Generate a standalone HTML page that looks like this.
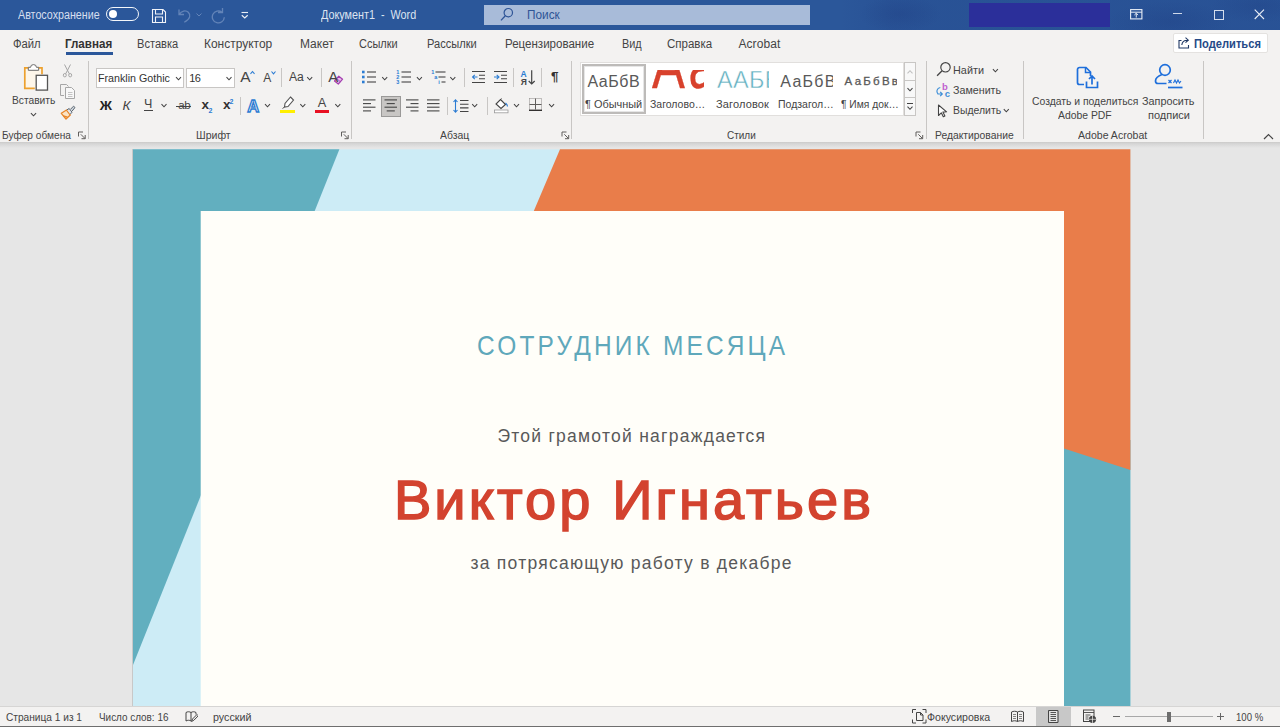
<!DOCTYPE html>
<html lang="ru"><head><meta charset="utf-8"><title>Документ1 - Word</title>
<style>
html,body{margin:0;padding:0;}
body{width:1280px;height:727px;overflow:hidden;background:#e6e6e6;font-family:"Liberation Sans", sans-serif;}
#app{position:relative;width:1280px;height:727px;overflow:hidden;}
#app div,#app svg,#app span{position:absolute;}
#app span{white-space:pre;line-height:1;transform-origin:0 50%;}
#app span span{position:static;}
</style></head><body><div id="app">
<div style="left:0px;top:0px;width:1280px;height:30px;background:#2b579a;"></div>
<div style="left:840px;top:0px;width:440px;height:30px;background:radial-gradient(ellipse 60px 26px at 60px 14px,rgba(20,40,110,0.160),transparent 70%),radial-gradient(ellipse 90px 30px at 330px 22px,rgba(20,40,110,0.160),transparent 70%),radial-gradient(ellipse 70px 24px at 420px 6px,rgba(20,40,110,0.140),transparent 70%),linear-gradient(to right,transparent,rgba(20,40,110,0.100) 12%);"></div>
<div style="left:0px;top:30px;width:1280px;height:112px;background:#f3f2f1;"></div>
<div style="left:0px;top:142px;width:1280px;height:6px;background:linear-gradient(#cbcac9,#d6d6d6 30%,#e6e6e6);"></div>
<div style="left:0px;top:148px;width:1280px;height:558px;background:#e6e6e6;"></div>
<div style="left:0px;top:706px;width:1280px;height:21px;background:#f3f2f1;"></div>
<div style="left:0px;top:706px;width:1280px;height:1px;background:#d6d5d4;"></div>
<div style="left:0px;top:725.6px;width:1280px;height:1.4px;background:#6e6e6e;"></div>
<div style="left:484px;top:5px;width:326px;height:20px;background:#a8bbd9;"></div>
<div style="left:969px;top:3px;width:141px;height:24px;background:#2b2f9a;"></div>
<div style="left:1173px;top:13.2px;width:9px;height:1px;background:#cfd9ea;"></div>
<div style="left:66px;top:52.3px;width:47px;height:2.8px;background:#2b579a;"></div>
<div style="left:88px;top:61px;width:1px;height:77.5px;background:#c8c6c4;"></div>
<div style="left:351.3px;top:61px;width:1px;height:77.5px;background:#c8c6c4;"></div>
<div style="left:571.2px;top:61px;width:1px;height:77.5px;background:#c8c6c4;"></div>
<div style="left:925.8px;top:61px;width:1px;height:77.5px;background:#c8c6c4;"></div>
<div style="left:1022.5px;top:61px;width:1px;height:77.5px;background:#c8c6c4;"></div>
<div style="left:1203.2px;top:61px;width:1px;height:77.5px;background:#c8c6c4;"></div>
<div style="left:281.1px;top:68px;width:1px;height:19px;background:#c8c6c4;"></div>
<div style="left:320.9px;top:68px;width:1px;height:19px;background:#c8c6c4;"></div>
<div style="left:144px;top:110.3px;width:8.5px;height:1px;background:#444;"></div>
<div style="left:176px;top:105.5px;width:14.5px;height:1px;background:#444;"></div>
<div style="left:239.5px;top:97px;width:1px;height:18px;background:#c8c6c4;"></div>
<div style="left:279.7px;top:109.5px;width:15px;height:3.3px;background:#ffef00;"></div>
<div style="left:315.3px;top:109.5px;width:14px;height:3.3px;background:#e81123;"></div>
<div style="left:464.4px;top:68px;width:1px;height:19px;background:#c8c6c4;"></div>
<div style="left:513.3px;top:68px;width:1px;height:19px;background:#c8c6c4;"></div>
<div style="left:540.9px;top:68px;width:1px;height:19px;background:#c8c6c4;"></div>
<div style="left:446.9px;top:97px;width:1px;height:18px;background:#c8c6c4;"></div>
<div style="left:487px;top:97px;width:1px;height:18px;background:#c8c6c4;"></div>
<div style="left:1035.5px;top:707px;width:35.5px;height:18.5px;background:#c8c8c8;"></div>
<div style="left:1113px;top:716px;width:7px;height:1px;background:#666;"></div>
<div style="left:1124.5px;top:716px;width:88.5px;height:1px;background:#a8a8a8;"></div>
<div style="left:1167px;top:711.5px;width:4px;height:10.5px;background:#6e6e6e;"></div>
<div style="left:1217px;top:716px;width:7px;height:1px;background:#666;"></div>
<div style="left:1220px;top:713px;width:1px;height:7px;background:#666;"></div>
<svg style="left:133px;top:149px" width="998" height="557" viewBox="133 149 998 557"><rect x="133" y="149.300" width="997.400" height="557" fill="#cdecf6"/><polygon points="133,149.300 339.400,149.300 133,665" fill="#62afbf"/><rect x="1060" y="440" width="70.400" height="266" fill="#62afbf"/><polygon points="560,149.300 1130.400,149.300 1130.400,470.100 1064,448.400 1064,211 533.800,211" fill="#e97d4a"/><rect x="200.700" y="211" width="863.300" height="495" fill="#fffef9"/></svg>
<div style="left:132px;top:149px;width:1px;height:557px;background:rgba(0,0,0,0.130)"></div>
<div style="left:106px;top:7px;width:30.500px;height:11.600px;border:1.700px solid #f4f7fb;border-radius:9px;box-sizing:content-box"></div>
<div style="left:109px;top:10.300px;width:8.200px;height:8.200px;border-radius:50%;background:#fff"></div>
<svg style="left:151px;top:8px" width="16" height="16" viewBox="0 0 16 16" ><path d="M1.5 1.5h10.5l2.5 2.5v10.5h-13z M4.5 1.5v4.5h7v-4.5 M4.5 14.5v-5.5h7v5.5" fill="none" stroke="#f0f3f9" stroke-width="1.1"/></svg>
<svg style="left:177px;top:7px" width="16" height="17" viewBox="0 0 16 17" ><path d="M2 2.5v5h5 M2.3 7.3c2-3.5 6.5-4.5 9-2s2.500 6.500-4 10" fill="none" stroke="#6384b8" stroke-width="1.3"/></svg>
<svg style="left:196px;top:13px" width="6" height="4" viewBox="0 0 6 4" ><path d="M0.500 0.500l2.500 2.500l2.500-2.500" fill="none" stroke="#6384b8" stroke-width="1"/></svg>
<svg style="left:211px;top:7px" width="16" height="17" viewBox="0 0 16 17" ><path d="M11.5 1v4.500h-4.500 M11 5.200a6 6 0 1 0 2.300 5" fill="none" stroke="#6384b8" stroke-width="1.3"/></svg>
<svg style="left:241px;top:11px" width="8" height="9" viewBox="0 0 8 9" ><path d="M0.500 1.500h6.500" stroke="#e9eef6" stroke-width="1.1"/><path d="M0.800 4.200l2.950 2.800l2.950-2.800" fill="none" stroke="#e9eef6" stroke-width="1.2"/></svg>
<svg style="left:500px;top:7px" width="14" height="15" viewBox="0 0 14 15" ><circle cx="8.300" cy="5.700" r="4.200" fill="none" stroke="#2e5496" stroke-width="1.2"/><path d="M5.300 8.800l-4.300 4.600" stroke="#2e5496" stroke-width="1.3"/></svg>
<svg style="left:1130px;top:9px" width="13" height="11" viewBox="0 0 13 11" ><rect x="0.600" y="0.600" width="11.300" height="9.300" fill="none" stroke="#e9eef6" stroke-width="1.1"/><path d="M0.600 3.200h11.300" stroke="#e9eef6" stroke-width="1"/><path d="M6.250 8.500v-4 M4.400 6l1.850-1.800l1.850 1.800" fill="none" stroke="#e9eef6" stroke-width="1"/></svg>
<div style="left:1214px;top:10px;width:7.500px;height:7.500px;border:1px solid #d5deed"></div>
<svg style="left:1254px;top:9px" width="11" height="11" viewBox="0 0 11 11" ><path d="M0.700 0.700l9.300 9.300 M10 0.700l-9.300 9.300" stroke="#e9eef6" stroke-width="1.1"/></svg>
<div style="left:1173px;top:33px;width:93px;height:18px;background:#fff;border:1px solid #e4e2e0;border-radius:2px"></div>
<svg style="left:1178px;top:36px" width="13" height="13" viewBox="0 0 13 13" ><path d="M3.500 4.500h-2.500v7.500h9.500v-3" fill="none" stroke="#1f3864" stroke-width="1.1"/><path d="M3.800 9c0.300-3 2.500-4.800 5.700-4.800 M7.500 1.700l2.800 2.500l-2.800 2.500" fill="none" stroke="#1f3864" stroke-width="1.1"/></svg>
<svg style="left:29px;top:112px" width="9" height="5" viewBox="0 0 9 5" ><g transform="translate(0.9 0.05)"><path d="M1 1l2.6 2.7l2.6 -2.7" fill="none" stroke="#444" stroke-width="1.05"/></g></svg>
<svg style="left:78px;top:131px" width="8" height="9" viewBox="0 0 8 9" ><g transform="translate(0 0.5)"><path d="M0.500 5v-4.500h4.500" fill="none" stroke="#605e5c" stroke-width="1"/><path d="M2.800 2.800l4.200 4.200 M7.200 3.500v3.700h-3.700" fill="none" stroke="#605e5c" stroke-width="1"/></g></svg>
<svg style="left:23px;top:63px" width="26" height="29" viewBox="0 0 26 29" ><rect x="1.800" y="4.800" width="17.200" height="20.600" fill="#fdf6ea"/><path d="M5.500 4.800h-3.700v20.600h10" fill="none" stroke="#eda12e" stroke-width="1.700"/><path d="M15 4.800h4v6.500" fill="none" stroke="#eda12e" stroke-width="1.700"/><path d="M5.300 7.300v-3h2.300a2.900 2.700 0 0 1 5.800 0h2.300v3z" fill="#fff" stroke="#6a6a6a" stroke-width="1"/><rect x="13.200" y="12.300" width="11.300" height="14.800" fill="#fff" stroke="#555" stroke-width="1.300"/></svg>
<svg style="left:62px;top:64px" width="11" height="14" viewBox="0 0 11 14" ><g transform="translate(0.5 0)"><path d="M2 0.500l4.800 9.300 M8 0.500l-4.800 9.300" fill="none" stroke="#a6a6a6" stroke-width="1"/><ellipse cx="2.300" cy="11.200" rx="1.500" ry="1.700" fill="none" stroke="#a6a6a6" stroke-width="1"/><ellipse cx="7.700" cy="11.200" rx="1.500" ry="1.700" fill="none" stroke="#a6a6a6" stroke-width="1"/></g></svg>
<svg style="left:60px;top:84px" width="16" height="15" viewBox="0 0 16 15" ><path d="M4 11.500h-3.500v-11h6l2 2" fill="none" stroke="#a6a6a6" stroke-width="1"/><path d="M5.500 3.500h6l3 3v8h-9z" fill="#f8f8f8" stroke="#a6a6a6" stroke-width="1"/><path d="M8 8.500h4.500 M8 10.500h4.500 M8 12.500h4.500" stroke="#b5b5b5" stroke-width="0.800"/></svg>
<svg style="left:60px;top:105px" width="16" height="15" viewBox="0 0 16 15" ><path d="M1.300 8.300l5.200-3.300l3.800 5l-4.300 4z" fill="#fbe3c4" stroke="#e8862a" stroke-width="1.300" stroke-linejoin="round"/><path d="M3.300 10.800l4.200 1.400" stroke="#e8862a" stroke-width="1.400"/><path d="M7 4.800l2.200-1.300l2.800 3.700l-1.700 2" fill="#dfe5ec" stroke="#5b6670" stroke-width="1"/><path d="M10.300 4.500l3.200-3.300l1.500 1.300l-3 3.700" fill="#cfd6de" stroke="#5b6670" stroke-width="1"/></svg>
<div style="left:96px;top:67.700px;width:85.500px;height:18px;background:#fff;border:1px solid #c8c6c4"></div>
<div style="left:186px;top:67.700px;width:46.500px;height:18px;background:#fff;border:1px solid #c8c6c4"></div>
<svg style="left:175px;top:76px" width="7" height="5" viewBox="0 0 7 5" ><g transform="translate(0.0 0.2)"><path d="M1 1l2.5 2.6l2.5 -2.6" fill="none" stroke="#444" stroke-width="1.05"/></g></svg>
<svg style="left:225px;top:76px" width="8" height="5" viewBox="0 0 8 5" ><g transform="translate(0.5 0.2)"><path d="M1 1l2.5 2.6l2.5 -2.6" fill="none" stroke="#444" stroke-width="1.05"/></g></svg>
<svg style="left:249px;top:70px" width="7" height="5" viewBox="0 0 7 5" ><g transform="translate(0.8 0.5)"><path d="M0.700 3.300l2-2.300l2 2.300" fill="none" stroke="#2b7cd3" stroke-width="1.100"/></g></svg>
<svg style="left:270px;top:70px" width="7" height="5" viewBox="0 0 7 5" ><g transform="translate(0.8 0.5)"><path d="M0.700 1l2 2.300l2-2.300" fill="none" stroke="#2b7cd3" stroke-width="1.100"/></g></svg>
<svg style="left:306px;top:76px" width="8" height="5" viewBox="0 0 8 5" ><g transform="translate(0.2 0.2)"><path d="M1 1l2.5 2.6l2.5 -2.6" fill="none" stroke="#444" stroke-width="1.05"/></g></svg>
<svg style="left:333px;top:75px" width="12" height="10" viewBox="0 0 12 10" ><g transform="translate(0.5 0)"><path d="M1 6l4.300-4.800l3.800 3l-4.300 4.800z" fill="#e9c4ec" stroke="#a43fb0" stroke-width="1.200" stroke-linejoin="round"/><path d="M3.200 3.700l3.700 3" stroke="#a43fb0" stroke-width="0.900"/></g></svg>
<svg style="left:160px;top:103px" width="8" height="5" viewBox="0 0 8 5" ><g transform="translate(0.5 0.2)"><path d="M1 1l2.5 2.6l2.5 -2.6" fill="none" stroke="#444" stroke-width="1.05"/></g></svg>
<svg style="left:264px;top:103px" width="7" height="5" viewBox="0 0 7 5" ><g transform="translate(0.0 0.2)"><path d="M1 1l2.5 2.6l2.5 -2.6" fill="none" stroke="#444" stroke-width="1.05"/></g></svg>
<svg style="left:281px;top:96px" width="14" height="13" viewBox="0 0 14 13" ><path d="M9.500 1l3 3l-5.500 6.500l-3.500 0.500l0.500-3.500z" fill="#fff" stroke="#555" stroke-width="1.100"/><path d="M3.500 11l-2 1.500" stroke="#555" stroke-width="1"/></svg>
<svg style="left:299px;top:103px" width="8" height="5" viewBox="0 0 8 5" ><g transform="translate(0.3 0.2)"><path d="M1 1l2.5 2.6l2.5 -2.6" fill="none" stroke="#444" stroke-width="1.05"/></g></svg>
<svg style="left:334px;top:103px" width="8" height="5" viewBox="0 0 8 5" ><g transform="translate(0.3 0.2)"><path d="M1 1l2.5 2.6l2.5 -2.6" fill="none" stroke="#444" stroke-width="1.05"/></g></svg>
<svg style="left:341px;top:131px" width="8" height="9" viewBox="0 0 8 9" ><g transform="translate(0 0.5)"><path d="M0.500 5v-4.500h4.500" fill="none" stroke="#605e5c" stroke-width="1"/><path d="M2.800 2.800l4.200 4.200 M7.200 3.500v3.700h-3.700" fill="none" stroke="#605e5c" stroke-width="1"/></g></svg>
<svg style="left:362px;top:70px" width="15" height="14" viewBox="0 0 15 14" ><rect x="0" y="0.7" width="2.600" height="2.600" fill="#2b7cd3"/><path d="M5 2.0h9" stroke="#444" stroke-width="1.100"/><rect x="0" y="5.7" width="2.600" height="2.600" fill="#2b7cd3"/><path d="M5 7.0h9" stroke="#444" stroke-width="1.100"/><rect x="0" y="10.7" width="2.600" height="2.600" fill="#2b7cd3"/><path d="M5 12.0h9" stroke="#444" stroke-width="1.100"/></svg>
<svg style="left:381px;top:76px" width="8" height="5" viewBox="0 0 8 5" ><g transform="translate(0.2 0.2)"><path d="M1 1l2.5 2.6l2.5 -2.6" fill="none" stroke="#444" stroke-width="1.05"/></g></svg>
<svg style="left:401px;top:69px" width="11" height="16" viewBox="0 0 11 16" ><g transform="translate(0.5 0.5)"><path d="M0 2.5h9.500" stroke="#444" stroke-width="1.100"/><path d="M0 7.5h9.500" stroke="#444" stroke-width="1.100"/><path d="M0 12.5h9.500" stroke="#444" stroke-width="1.100"/></g></svg>
<svg style="left:415px;top:76px" width="8" height="5" viewBox="0 0 8 5" ><g transform="translate(0.9 0.2)"><path d="M1 1l2.5 2.6l2.5 -2.6" fill="none" stroke="#444" stroke-width="1.05"/></g></svg>
<svg style="left:431px;top:69px" width="15" height="16" viewBox="0 0 15 16" ><g transform="translate(0 0.5)"><path d="M4.500 2.500h10" stroke="#444" stroke-width="1.100"/><path d="M7.500 7.500h7" stroke="#444" stroke-width="1.100"/><path d="M10.500 12.500h4" stroke="#444" stroke-width="1.100"/></g></svg>
<svg style="left:449px;top:76px" width="8" height="5" viewBox="0 0 8 5" ><g transform="translate(0.3 0.2)"><path d="M1 1l2.5 2.6l2.5 -2.6" fill="none" stroke="#444" stroke-width="1.05"/></g></svg>
<svg style="left:472px;top:70px" width="14" height="15" viewBox="0 0 14 15" ><g transform="translate(0 0.5)"><path d="M0 1h13 M7 4.700h6 M7 8.300h6 M0 12h13" stroke="#444" stroke-width="1.100"/><path d="M0.500 6.500h5 M2.800 4.300l-2.300 2.200l2.300 2.200" fill="none" stroke="#2b7cd3" stroke-width="1.100"/></g></svg>
<svg style="left:494px;top:70px" width="14" height="15" viewBox="0 0 14 15" ><g transform="translate(0 0.5)"><path d="M0 1h13 M7 4.700h6 M7 8.300h6 M0 12h13" stroke="#444" stroke-width="1.100"/><path d="M0 6.500h5 M2.700 4.300l2.300 2.200l-2.300 2.200" fill="none" stroke="#2b7cd3" stroke-width="1.100"/></g></svg>
<svg style="left:527px;top:70px" width="9" height="16" viewBox="0 0 9 16" ><g transform="translate(0.7 0)"><path d="M4 0.300v13.700 M1 11l3 3l3-3" fill="none" stroke="#444" stroke-width="1.200"/></g></svg>
<svg style="left:363px;top:98px" width="14" height="14" viewBox="0 0 14 14" ><g transform="translate(0 0.9)"><path d="M0 1h12.5" stroke="#444" stroke-width="1.1"/><path d="M0 4.7h8" stroke="#444" stroke-width="1.1"/><path d="M0 8.3h12.5" stroke="#444" stroke-width="1.1"/><path d="M0 12h8" stroke="#444" stroke-width="1.1"/></g></svg>
<div style="left:381.200px;top:96.200px;width:17.600px;height:18.500px;background:#c8c6c4;border:1px solid #9a9998"></div>
<svg style="left:384px;top:98px" width="14" height="14" viewBox="0 0 14 14" ><g transform="translate(0.5 0.9)"><path d="M0 1h12.5" stroke="#444" stroke-width="1.1"/><path d="M2.2 4.7h8.100000000000001" stroke="#444" stroke-width="1.1"/><path d="M0 8.3h12.5" stroke="#444" stroke-width="1.1"/><path d="M2.2 12h8.100000000000001" stroke="#444" stroke-width="1.1"/></g></svg>
<svg style="left:406px;top:98px" width="14" height="14" viewBox="0 0 14 14" ><g transform="translate(0 0.9)"><path d="M0 1h12.5" stroke="#444" stroke-width="1.1"/><path d="M4.5 4.7h8.0" stroke="#444" stroke-width="1.1"/><path d="M0 8.3h12.5" stroke="#444" stroke-width="1.1"/><path d="M4.5 12h8.0" stroke="#444" stroke-width="1.1"/></g></svg>
<svg style="left:427px;top:98px" width="14" height="14" viewBox="0 0 14 14" ><g transform="translate(0 0.9)"><path d="M0 1h12.5" stroke="#444" stroke-width="1.1"/><path d="M0 4.7h12.5" stroke="#444" stroke-width="1.1"/><path d="M0 8.3h12.5" stroke="#444" stroke-width="1.1"/><path d="M0 12h12.5" stroke="#444" stroke-width="1.1"/></g></svg>
<svg style="left:453px;top:98px" width="16" height="16" viewBox="0 0 16 16" ><g transform="translate(0 0.5)"><path d="M2.500 1.500v12 M0.500 3.500l2-2.200l2 2.200 M0.500 11.500l2 2.200l2-2.200" fill="none" stroke="#2b7cd3" stroke-width="1.100"/><path d="M7 2h8.500 M7 5.800h8.500 M7 9.400h8.500 M7 13h8.500" stroke="#444" stroke-width="1.100"/></g></svg>
<svg style="left:471px;top:103px" width="8" height="5" viewBox="0 0 8 5" ><g transform="translate(0.2 0.2)"><path d="M1 1l2.5 2.6l2.5 -2.6" fill="none" stroke="#444" stroke-width="1.05"/></g></svg>
<svg style="left:494px;top:97px" width="15" height="17" viewBox="0 0 15 17" ><g transform="translate(0 0.5)"><path d="M6.500 2l5 5l-4.500 4l-5-4.500z" fill="#fff" stroke="#444" stroke-width="1.100"/><path d="M5 3.500l2.500-2.500" stroke="#444" stroke-width="1"/><path d="M11.500 5.500c1.200 1 2 2.400 2 3.600" fill="none" stroke="#2b7cd3" stroke-width="1.200"/><rect x="0.500" y="12.500" width="13.500" height="2.800" fill="#fff" stroke="#999" stroke-width="0.800"/></g></svg>
<svg style="left:513px;top:103px" width="7" height="5" viewBox="0 0 7 5" ><g transform="translate(0.0 0.2)"><path d="M1 1l2.5 2.6l2.5 -2.6" fill="none" stroke="#444" stroke-width="1.05"/></g></svg>
<svg style="left:528px;top:97px" width="15" height="15" viewBox="0 0 15 15" ><path d="M1.500 1.500h12 M1.500 1.500v11 M13.500 1.500v11" fill="none" stroke="#8a8886" stroke-width="1" stroke-dasharray="1 1"/><path d="M7.500 1.500v11 M1.500 7.500h12" stroke="#605e5c" stroke-width="1"/><path d="M1 13.300h13" stroke="#323130" stroke-width="1.400"/></svg>
<svg style="left:548px;top:103px" width="8" height="5" viewBox="0 0 8 5" ><g transform="translate(0.1 0.2)"><path d="M1 1l2.5 2.6l2.5 -2.6" fill="none" stroke="#444" stroke-width="1.05"/></g></svg>
<svg style="left:561px;top:131px" width="9" height="9" viewBox="0 0 9 9" ><g transform="translate(0.5 0.5)"><path d="M0.500 5v-4.500h4.500" fill="none" stroke="#605e5c" stroke-width="1"/><path d="M2.800 2.800l4.200 4.200 M7.200 3.500v3.700h-3.700" fill="none" stroke="#605e5c" stroke-width="1"/></g></svg>
<div style="left:580px;top:62px;width:324px;height:54px;background:#fff;border:1px solid #e1dfdd;box-sizing:border-box"></div>
<div style="left:582px;top:64px;width:64px;height:50px;background:#fff;border:2px solid #bdbbb9;box-sizing:border-box;box-shadow:inset 0 0 0 1px #e6e6e6"></div>
<div style="left:651px;top:70.250px;width:53px;height:18.600px;overflow:hidden"><span style="left:0.500px;top:-36.700px;font-size:64px;color:#d8412c;transform:scaleX(0.770);transform-origin:0 0;letter-spacing:4px;-webkit-text-stroke:0.400px #d8412c">Аа</span></div>
<div style="left:716px;top:66px;width:52.500px;height:26px;overflow:hidden"><span style="left:0.500px;top:1.800px;font-size:24.500px;color:#62afbf;letter-spacing:0.300px;transform:scaleX(0.96);transform-origin:0 0;-webkit-text-stroke:0.500px #fff">ААБВ</span></div>
<div style="left:779px;top:70px;width:54px;height:22px;overflow:hidden"><span style="left:1.300px;top:4px;font-size:16px;color:#595959;letter-spacing:1.250px">АаБбВв</span></div>
<div style="left:842px;top:70px;width:54.500px;height:22px;overflow:hidden"><span style="left:2.600px;top:5.500px;font-size:11.500px;color:#595959;letter-spacing:2.250px;-webkit-text-stroke:0.300px #595959">АаБбВв</span></div>
<div style="left:904px;top:62px;width:12px;height:19px;background:#f8f8f8;border:1px solid #c8c6c4;box-sizing:border-box"></div>
<div style="left:904px;top:80px;width:12px;height:18px;background:#f8f8f8;border:1px solid #c8c6c4;box-sizing:border-box"></div>
<div style="left:904px;top:97px;width:12px;height:19px;background:#f8f8f8;border:1px solid #c8c6c4;box-sizing:border-box"></div>
<svg style="left:906px;top:69px" width="8" height="6" viewBox="0 0 8 6" ><g transform="translate(0.5 0.5)"><path d="M1 3.800l2.500-2.600l2.500 2.600" fill="none" stroke="#c0c0c0" stroke-width="1.100"/></g></svg>
<svg style="left:906px;top:87px" width="8" height="5" viewBox="0 0 8 5" ><g transform="translate(0.5 0.15)"><path d="M1 1l2.5 2.7l2.5 -2.7" fill="none" stroke="#444" stroke-width="1.05"/></g></svg>
<div style="left:907px;top:103.300px;width:6px;height:1.100px;background:#444"></div>
<svg style="left:906px;top:105px" width="8" height="6" viewBox="0 0 8 6" ><g transform="translate(0.5 0.65)"><path d="M1 1l2.5 2.7l2.5 -2.7" fill="none" stroke="#444" stroke-width="1.05"/></g></svg>
<svg style="left:915px;top:131px" width="9" height="9" viewBox="0 0 9 9" ><g transform="translate(0.5 0.5)"><path d="M0.500 5v-4.500h4.500" fill="none" stroke="#605e5c" stroke-width="1"/><path d="M2.800 2.800l4.200 4.200 M7.200 3.500v3.700h-3.700" fill="none" stroke="#605e5c" stroke-width="1"/></g></svg>
<svg style="left:936px;top:61px" width="16" height="16" viewBox="0 0 16 16" ><g transform="translate(0.5 0.5)"><circle cx="9" cy="5.800" r="4.700" fill="none" stroke="#444" stroke-width="1.200"/><path d="M5.600 9.300l-5 5" stroke="#444" stroke-width="1.300"/></g></svg>
<svg style="left:991px;top:68px" width="8" height="5" viewBox="0 0 8 5" ><g transform="translate(0.9 0.2)"><path d="M1 1l2.5 2.6l2.5 -2.6" fill="none" stroke="#444" stroke-width="1.05"/></g></svg>
<svg style="left:935px;top:86px" width="10" height="12" viewBox="0 0 10 12" ><g transform="translate(0.5 0.5)"><path d="M4.800 1c-3.300 0.800-4.500 4-2.300 6.500h4 M4.700 5.300l2.100 2.200l-2.100 2.200" fill="none" stroke="#3f8fd8" stroke-width="1.200"/></g></svg>
<svg style="left:937px;top:104px" width="11" height="14" viewBox="0 0 11 14" ><path d="M1.500 1l0 10.500l2.800-2.700l2 4l1.600-0.800l-2-3.900l3.700-0.300z" fill="#fff" stroke="#444" stroke-width="1.100" stroke-linejoin="round"/></svg>
<svg style="left:1002px;top:108px" width="8" height="5" viewBox="0 0 8 5" ><g transform="translate(0.8 0.2)"><path d="M1 1l2.5 2.6l2.5 -2.6" fill="none" stroke="#444" stroke-width="1.05"/></g></svg>
<svg style="left:1076px;top:66px" width="23" height="24" viewBox="0 0 23 24" ><path d="M8 18.500h-4.500a2 2 0 0 1-2-2v-13a2 2 0 0 1 2-2h6.500l4.500 4.500v4" fill="none" stroke="#1e6fdb" stroke-width="1.700"/><path d="M9.500 1.500v5h5" fill="none" stroke="#1e6fdb" stroke-width="1.500"/><path d="M10.500 15.500v6h11v-6 M16 18.500v-8 M13 13l3-3l3 3" fill="none" stroke="#1e6fdb" stroke-width="1.700"/></svg>
<svg style="left:1154px;top:63px" width="30" height="27" viewBox="0 0 30 27" ><circle cx="11" cy="7" r="5.300" fill="none" stroke="#1e6fdb" stroke-width="1.700"/><path d="M8 11.500c-4 1.500-6.500 4-6.500 6.500c0 1.500 1 2.500 2.500 2.500h8.500" fill="none" stroke="#1e6fdb" stroke-width="1.700"/><path d="M14.500 17l3 3 M17.500 17l-3 3" stroke="#1e6fdb" stroke-width="1.200"/><path d="M19.500 20l1.500-3l1.500 3l1.500-3l1.500 3l1.500-2" fill="none" stroke="#1e6fdb" stroke-width="1.100"/><path d="M14 24.500h14.500" stroke="#1e6fdb" stroke-width="1.700"/></svg>
<svg style="left:1263px;top:133px" width="11" height="7" viewBox="0 0 11 7" ><path d="M1 6l4.500-4.500l4.500 4.500" fill="none" stroke="#444" stroke-width="1.200"/></svg>
<svg style="left:185px;top:710px" width="13" height="13" viewBox="0 0 13 13" ><path d="M6 2.500c-1.500-1-3.500-1-5 0v8.500c1.500-1 3.500-1 5 0z M6 2.500c1.500-1 3.500-1 5 0v2" fill="none" stroke="#444" stroke-width="1"/><path d="M6.500 11.500l1-2.500l4.500-4.500l1.300 1.300l-4.500 4.500z" fill="#f3f2f1" stroke="#444" stroke-width="1"/></svg>
<svg style="left:912px;top:709px" width="15" height="15" viewBox="0 0 15 15" ><path d="M0.500 4v-3.500h3.500 M10.500 0.500h3.500v3.500 M14 10.500v3.500h-3.500 M4 14h-3.500v-3.500" fill="none" stroke="#444" stroke-width="1"/><path d="M4.500 3.500h4l2.500 2.500v5.500h-6.500z M8.500 3.500v2.500h2.500" fill="none" stroke="#444" stroke-width="1"/></svg>
<svg style="left:1011px;top:710px" width="13" height="13" viewBox="0 0 13 13" ><path d="M6.500 2c-1.800-1-4-1-6 0v9.500c2-1 4.200-1 6 0c1.800-1 4-1 6 0v-9.500c-2-1-4.200-1-6 0z M6.500 2v9.500" fill="none" stroke="#444" stroke-width="1"/><path d="M2 4.500h3 M2 6.500h3 M2 8.500h3 M8 4.500h3 M8 6.500h3 M8 8.500h3" stroke="#666" stroke-width="0.800"/></svg>
<svg style="left:1048px;top:710px" width="11" height="13" viewBox="0 0 11 13" ><rect x="0.500" y="0.500" width="9.500" height="12" rx="0.800" fill="#e4e4e4" stroke="#444" stroke-width="1.100"/><path d="M2.500 2.500h5.500 M2.500 4.500h5.500 M2.500 6.500h5.500 M2.500 8.500h5.500 M2.500 10.500h5.500" stroke="#555" stroke-width="1"/></svg>
<svg style="left:1083px;top:709px" width="14" height="15" viewBox="0 0 14 15" ><g transform="translate(0 0.5)"><rect x="0.500" y="0.500" width="10.500" height="11.500" fill="none" stroke="#444" stroke-width="1"/><path d="M0.500 3h10.500 M2.500 5.500h5 M2.500 7.500h3 M2.500 9.500h3" stroke="#444" stroke-width="0.900"/><circle cx="9.500" cy="9.800" r="3.600" fill="#444"/><path d="M6 9.800h7 M9.500 6.200v7.200" stroke="#f3f2f1" stroke-width="0.700"/></g></svg>
<span style="left:477.40px;top:331.68px;font-size:27.2px;color:#5fa8bb;letter-spacing:3.519px;transform:scaleX(0.9000);">СОТРУДНИК МЕСЯЦА</span>
<span style="left:497.40px;top:427.59px;font-size:17.5px;color:#595959;letter-spacing:1.257px;">Этой грамотой награждается</span>
<span style="left:393.90px;top:472.20px;font-size:56px;color:#d3432f;letter-spacing:3.095px;-webkit-text-stroke:1.500px #d3432f;">Виктор Игнатьев</span>
<span style="left:470.40px;top:554.69px;font-size:17.5px;color:#595959;letter-spacing:1.259px;">за потрясающую работу в декабре</span>
<span style="left:18.40px;top:8.84px;font-size:12px;color:#d6dfef;transform:scaleX(0.8930);">Автосохранение</span>
<span style="left:320.90px;top:8.84px;font-size:12px;color:#dde4f1;transform:scaleX(0.9006);">Документ1  -  Word</span>
<span style="left:526.90px;top:8.84px;font-size:12px;color:#2e5496;transform:scaleX(0.9830);">Поиск</span>
<span style="left:12.90px;top:37.84px;font-size:12px;color:#444444;transform:scaleX(0.9385);">Файл</span>
<span style="left:137.40px;top:37.84px;font-size:12px;color:#444444;transform:scaleX(0.9236);">Вставка</span>
<span style="left:204.40px;top:37.84px;font-size:12px;color:#444444;transform:scaleX(0.9968);">Конструктор</span>
<span style="left:299.70px;top:37.84px;font-size:12px;color:#444444;transform:scaleX(0.9980);">Макет</span>
<span style="left:359.40px;top:37.84px;font-size:12px;color:#444444;transform:scaleX(0.9160);">Ссылки</span>
<span style="left:426.90px;top:37.84px;font-size:12px;color:#444444;transform:scaleX(0.9228);">Рассылки</span>
<span style="left:505.00px;top:37.84px;font-size:12px;color:#444444;transform:scaleX(0.9615);">Рецензирование</span>
<span style="left:621.90px;top:37.84px;font-size:12px;color:#444444;transform:scaleX(0.9071);">Вид</span>
<span style="left:667.10px;top:37.84px;font-size:12px;color:#444444;transform:scaleX(0.9601);">Справка</span>
<span style="left:738.40px;top:37.84px;font-size:12px;color:#444444;letter-spacing:0.090px;">Acrobat</span>
<span style="left:65.40px;top:37.84px;font-size:12px;color:#333;font-weight:700;transform:scaleX(0.9670);">Главная</span>
<span style="left:1193.70px;top:37.64px;font-size:12px;color:#264a87;font-weight:700;transform:scaleX(0.9288);">Поделиться</span>
<span style="left:12.10px;top:94.89px;font-size:11px;color:#444444;transform:scaleX(0.9284);">Вставить</span>
<span style="left:2.20px;top:129.69px;font-size:11px;color:#444444;transform:scaleX(0.9217);">Буфер обмена</span>
<span style="left:98.40px;top:72.69px;font-size:11px;color:#333;transform:scaleX(0.9718);">Franklin Gothic</span>
<span style="left:189.30px;top:72.69px;font-size:11px;color:#333;letter-spacing:-0.600px;">16</span>
<span style="left:240.30px;top:68.68px;font-size:15.5px;color:#444444;">A</span>
<span style="left:263.30px;top:71.64px;font-size:12px;color:#444444;">A</span>
<span style="left:288.70px;top:71.22px;font-size:12.5px;color:#444444;transform:scaleX(0.9741);">Aa</span>
<span style="left:328.30px;top:69.10px;font-size:15px;color:#444444;">A</span>
<span style="left:99.70px;top:98.57px;font-size:13.5px;color:#222;font-weight:700;">Ж</span>
<span style="left:122.40px;top:98.57px;font-size:13.5px;color:#444444;font-style:italic;">К</span>
<span style="left:143.90px;top:98.42px;font-size:12.5px;color:#444444;">Ч</span>
<span style="left:178.30px;top:99.77px;font-size:11.5px;color:#444444;letter-spacing:-0.400px;">ab</span>
<span style="left:201.50px;top:98.07px;font-size:13.5px;color:#333;font-weight:700;">x</span>
<span style="left:208.50px;top:106.57px;font-size:7px;color:#2b7cd3;font-weight:700;">2</span>
<span style="left:223.00px;top:98.07px;font-size:13.5px;color:#333;font-weight:700;">x</span>
<span style="left:229.50px;top:97.57px;font-size:7px;color:#2b7cd3;font-weight:700;">2</span>
<span style="left:247.20px;top:97.63px;font-size:16.5px;color:#f3f2f1;font-weight:700;-webkit-text-stroke:1.300px #2b7cd3;">A</span>
<span style="left:317.80px;top:97.36px;font-size:12.8px;color:#444444;">A</span>
<span style="left:195.90px;top:129.69px;font-size:11px;color:#444444;transform:scaleX(0.9585);">Шрифт</span>
<span style="left:396.30px;top:69.64px;font-size:5.5px;color:#2b7cd3;font-weight:700;">1</span>
<span style="left:396.30px;top:74.64px;font-size:5.5px;color:#2b7cd3;font-weight:700;">2</span>
<span style="left:396.30px;top:79.64px;font-size:5.5px;color:#2b7cd3;font-weight:700;">3</span>
<span style="left:431.30px;top:69.64px;font-size:5.5px;color:#2b7cd3;font-weight:700;">1</span>
<span style="left:434.30px;top:74.64px;font-size:5.5px;color:#2b7cd3;font-weight:700;">a</span>
<span style="left:438.30px;top:79.64px;font-size:5.5px;color:#2b7cd3;font-weight:700;">i</span>
<span style="left:520.50px;top:69.60px;font-size:8.5px;color:#2b7cd3;font-weight:700;">А</span>
<span style="left:520.70px;top:77.70px;font-size:8.5px;color:#444;font-weight:700;">Я</span>
<span style="left:551.00px;top:69.87px;font-size:13.5px;color:#333;font-weight:700;">¶</span>
<span style="left:440.40px;top:129.69px;font-size:11px;color:#444444;transform:scaleX(0.9462);">Абзац</span>
<span style="left:587.40px;top:74.06px;font-size:16px;color:#595959;letter-spacing:0.527px;">АаБбВ</span>
<span style="left:585.40px;top:99.09px;font-size:11px;color:#444444;transform:scaleX(0.9932);">¶ Обычный</span>
<span style="left:650.40px;top:99.09px;font-size:11px;color:#444444;transform:scaleX(0.9533);">Заголово…</span>
<span style="left:715.90px;top:99.09px;font-size:11px;color:#444444;letter-spacing:0.160px;">Заголовок</span>
<span style="left:778.40px;top:99.09px;font-size:11px;color:#444444;transform:scaleX(0.9532);">Подзагол…</span>
<span style="left:841.40px;top:99.09px;font-size:11px;color:#444444;transform:scaleX(0.9337);">¶ Имя док…</span>
<span style="left:727.10px;top:129.69px;font-size:11px;color:#444444;transform:scaleX(0.9084);">Стили</span>
<span style="left:953.10px;top:64.69px;font-size:11px;color:#444444;transform:scaleX(0.9876);">Найти</span>
<span style="left:942.00px;top:81.96px;font-size:9.5px;color:#c05fcf;font-weight:700;">b</span>
<span style="left:944.80px;top:89.26px;font-size:9.5px;color:#3f8fd8;font-weight:700;">c</span>
<span style="left:952.80px;top:85.19px;font-size:11px;color:#444444;transform:scaleX(0.9729);">Заменить</span>
<span style="left:952.80px;top:104.99px;font-size:11px;color:#444444;transform:scaleX(0.9478);">Выделить</span>
<span style="left:935.40px;top:129.69px;font-size:11px;color:#444444;transform:scaleX(0.9392);">Редактирование</span>
<span style="left:1032.00px;top:95.59px;font-size:11px;color:#444444;transform:scaleX(0.9428);">Создать и поделиться</span>
<span style="left:1058.40px;top:109.89px;font-size:11px;color:#444444;transform:scaleX(0.9442);">Adobe PDF</span>
<span style="left:1142.40px;top:95.59px;font-size:11px;color:#444444;transform:scaleX(0.9836);">Запросить</span>
<span style="left:1148.40px;top:109.89px;font-size:11px;color:#444444;transform:scaleX(0.9976);">подписи</span>
<span style="left:1078.40px;top:129.69px;font-size:11px;color:#444444;transform:scaleX(0.9588);">Adobe Acrobat</span>
<span style="left:5.90px;top:711.99px;font-size:11px;color:#444444;transform:scaleX(0.9217);">Страница 1 из 1</span>
<span style="left:99.40px;top:711.99px;font-size:11px;color:#444444;transform:scaleX(0.9008);">Число слов: 16</span>
<span style="left:213.10px;top:711.99px;font-size:11px;color:#444444;transform:scaleX(0.9751);">русский</span>
<span style="left:926.90px;top:711.99px;font-size:11px;color:#444444;transform:scaleX(0.9619);">Фокусировка</span>
<span style="left:1236.40px;top:711.99px;font-size:11px;color:#444444;transform:scaleX(0.8717);">100 %</span>
</div></body></html>
